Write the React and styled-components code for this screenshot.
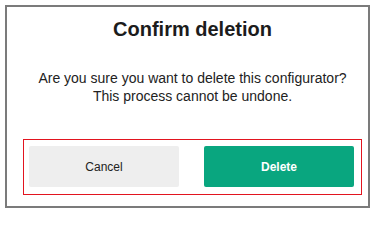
import React from 'react'
import styled, { createGlobalStyle } from 'styled-components'

const GlobalStyle = createGlobalStyle`
    body {
        margin: 0;
        background: #ffffff;
        font-family: "Liberation Sans", Arial, sans-serif;
    }
`

const Dialog = styled.div`
    box-sizing: border-box;
    width: 365px;
    height: 203px;
    margin: 5px 0 0 5px;
    border: 2px solid #7b7b7b;
    padding: 11px 6px 0 16px;
    display: flex;
    flex-direction: column;
    align-items: stretch;
    background: #ffffff;
`

const Title = styled.h2`
    margin: 0;
    font-size: 20px;
    line-height: 23px;
    font-weight: 700;
    color: #1c1c1c;
    text-align: center;
`

const Message = styled.p`
    margin: 28px 0 0;
    font-size: 14px;
    line-height: 18px;
    color: #222222;
    text-align: center;
`

const Actions = styled.div`
    margin-top: 34px;
    display: grid;
    grid-template-columns: 150px 150px;
    gap: 25px;
    padding: 6px 7px 7px 5px;
    border: 1px solid #e2141f;
`

const Button = styled.button`
    height: 41px;
    border: none;
    border-radius: 2px;
    font-family: "Liberation Sans", Arial, sans-serif;
    font-size: 12px;
    font-weight: ${({ $primary }) => ($primary ? 700 : 400)};
    color: ${({ $primary }) => ($primary ? '#ffffff' : '#222222')};
    background: ${({ $primary }) => ($primary ? '#09a67f' : '#eeeeee')};
    cursor: pointer;
`

export default function App() {
  return (
      <>
          <GlobalStyle />
          <Dialog>
              <Title>Confirm deletion</Title>
              <Message>
                  Are you sure you want to delete this configurator?<br />
                  This process cannot be undone.
              </Message>
              <Actions>
                  <Button>Cancel</Button>
                  <Button $primary>Delete</Button>
              </Actions>
          </Dialog>
      </>
  )
}
